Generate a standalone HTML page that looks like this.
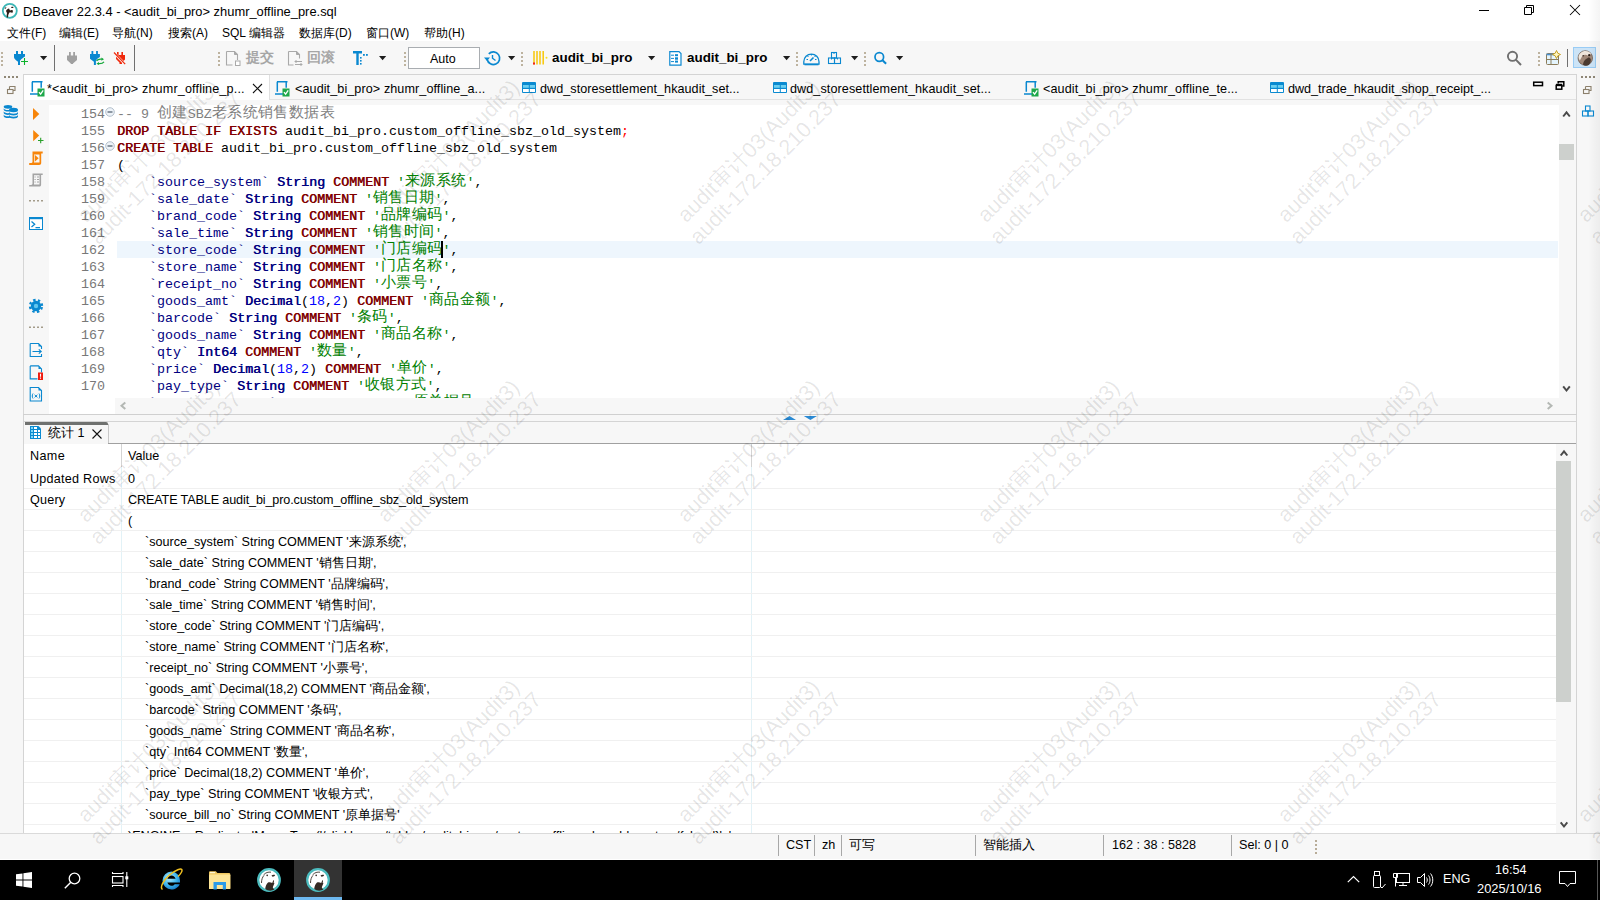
<!DOCTYPE html><html><head><meta charset="utf-8"><style>
*{box-sizing:border-box}
html,body{margin:0;padding:0;width:1600px;height:900px;overflow:hidden;background:#fff}
body{position:relative;font-family:"Liberation Sans",sans-serif;font-size:12px;color:#000}
.a{position:absolute}
.t{position:absolute;white-space:pre;line-height:1}
.mono{font-family:"Liberation Mono",monospace;font-size:13.333px;letter-spacing:0px}
.kw{color:#800000;font-weight:normal;text-shadow:0.55px 0 0 #800000}
.ty{color:#000080;font-weight:normal;text-shadow:0.55px 0 0 #000080}
.id{color:#000080}
.st{color:#008000}
.nu{color:#0000ff}
.cm{color:#808080}
.pl{color:#000}
.cj{font-size:14.6px;letter-spacing:0.4px;position:relative;top:-1px;line-height:0;font-weight:500}
.wm{position:absolute;transform-origin:0 0;transform:rotate(-45deg);white-space:pre;color:rgba(0,0,0,0.105);font-size:21.6px;line-height:24px;letter-spacing:0px;text-align:center}
</style></head><body>

<div class="a" style="left:0;top:0;width:1600px;height:41px;background:#fff"></div>
<div class="t" id="title" style="left:23px;top:6px;font-size:12.9px;color:#000">DBeaver 22.3.4 - &lt;audit_bi_pro&gt; zhumr_offline_pre.sql</div>
<div class="t" style="left:7px;top:27px;font-size:12px">文件(F)</div>
<div class="t" style="left:59px;top:27px;font-size:12px">编辑(E)</div>
<div class="t" style="left:112px;top:27px;font-size:12px">导航(N)</div>
<div class="t" style="left:168px;top:27px;font-size:12px">搜索(A)</div>
<div class="t" style="left:222px;top:27px;font-size:12px">SQL 编辑器</div>
<div class="t" style="left:299px;top:27px;font-size:12px">数据库(D)</div>
<div class="t" style="left:366px;top:27px;font-size:12px">窗口(W)</div>
<div class="t" style="left:424px;top:27px;font-size:12px">帮助(H)</div>
<div class="a" style="left:0;top:41px;width:1600px;height:33px;background:#f7f7f7"></div>
<div class="a" style="left:1px;top:52px;width:2px;height:2px;background:#bdb39f"></div><div class="a" style="left:1px;top:56px;width:2px;height:2px;background:#bdb39f"></div><div class="a" style="left:1px;top:60px;width:2px;height:2px;background:#bdb39f"></div><div class="a" style="left:1px;top:64px;width:2px;height:2px;background:#bdb39f"></div>
<div class="a" style="left:218px;top:52px;width:2px;height:2px;background:#bdb39f"></div><div class="a" style="left:218px;top:56px;width:2px;height:2px;background:#bdb39f"></div><div class="a" style="left:218px;top:60px;width:2px;height:2px;background:#bdb39f"></div><div class="a" style="left:218px;top:64px;width:2px;height:2px;background:#bdb39f"></div>
<div class="a" style="left:404px;top:52px;width:2px;height:2px;background:#bdb39f"></div><div class="a" style="left:404px;top:56px;width:2px;height:2px;background:#bdb39f"></div><div class="a" style="left:404px;top:60px;width:2px;height:2px;background:#bdb39f"></div><div class="a" style="left:404px;top:64px;width:2px;height:2px;background:#bdb39f"></div>
<div class="a" style="left:521px;top:52px;width:2px;height:2px;background:#bdb39f"></div><div class="a" style="left:521px;top:56px;width:2px;height:2px;background:#bdb39f"></div><div class="a" style="left:521px;top:60px;width:2px;height:2px;background:#bdb39f"></div><div class="a" style="left:521px;top:64px;width:2px;height:2px;background:#bdb39f"></div>
<div class="a" style="left:796px;top:52px;width:2px;height:2px;background:#bdb39f"></div><div class="a" style="left:796px;top:56px;width:2px;height:2px;background:#bdb39f"></div><div class="a" style="left:796px;top:60px;width:2px;height:2px;background:#bdb39f"></div><div class="a" style="left:796px;top:64px;width:2px;height:2px;background:#bdb39f"></div>
<div class="a" style="left:864px;top:52px;width:2px;height:2px;background:#bdb39f"></div><div class="a" style="left:864px;top:56px;width:2px;height:2px;background:#bdb39f"></div><div class="a" style="left:864px;top:60px;width:2px;height:2px;background:#bdb39f"></div><div class="a" style="left:864px;top:64px;width:2px;height:2px;background:#bdb39f"></div>
<div class="a" style="left:1538px;top:52px;width:2px;height:2px;background:#bdb39f"></div><div class="a" style="left:1538px;top:56px;width:2px;height:2px;background:#bdb39f"></div><div class="a" style="left:1538px;top:60px;width:2px;height:2px;background:#bdb39f"></div><div class="a" style="left:1538px;top:64px;width:2px;height:2px;background:#bdb39f"></div>
<div class="t" style="left:246px;top:51px;font-size:13.5px;font-weight:bold;color:#a6a6a6">提交</div>
<div class="t" style="left:307px;top:51px;font-size:13.5px;font-weight:bold;color:#a6a6a6">回滚</div>
<div class="a" style="left:408px;top:47px;width:72px;height:22px;background:#fff;border:1px solid #a9adb1"></div>
<div class="t" style="left:430px;top:53px;font-size:12.5px">Auto</div>
<div class="t" id="db1" style="left:552px;top:51px;font-size:13.4px;font-weight:bold">audit_bi_pro</div>
<div class="t" id="db2" style="left:687px;top:51px;font-size:13.4px;font-weight:bold">audit_bi_pro</div>
<div class="a" style="left:1573px;top:47px;width:23px;height:21px;background:#cce4f7;border:1px solid #99ccf5"></div>
<svg class="a" style="left:0;top:0" width="1600" height="74" viewBox="0 0 1600 74"><circle cx="9.8" cy="10.8" r="7" fill="#fff" stroke="#3cb6b6" stroke-width="1.8"/><path d="M8 17.5c0-2 .5-4 1.5-5 1-.5 2 .5 3 .2l.5-2c-.5-1-2-.8-3-.2L9 8.5c-1 0-2.5 1-3 2.5l1 2c-.3 1.5-.5 3 0 4.5z" fill="#2a1e18"/><path d="M11 7.2c.8-.5 2-.5 2.6 0-.4.8-1.2 1-2 .9z" fill="#2a1e18"/><path d="M5 9c.2-1 .8-1.6 1.3-2" stroke="#3a2e28" stroke-width=".9" fill="none"/><path d="M1479 10.5h10" stroke="#000" stroke-width="1"/><path d="M1524.5 7.5h7v7h-7z" fill="none" stroke="#000"/><path d="M1526.5 7.5v-2h7v7h-2" fill="none" stroke="#000"/><path d="M1570 5l10 10M1580 5l-10 10" stroke="#000" stroke-width="1.05"/><path d="M16 51h2v3h3v-3h2v3h2v2.5c-1.5 1.2-3.5 2-5 4.2V65h-2v-3.2C15.5 60 14 58.5 14 57.2V54h2z" fill="#0a88d0"/><path d="M21 61.5h7M24.5 58v7" stroke="#0cb32c" stroke-width="1.1"/><path d="M40 56h7.2l-3.6 4.2z" fill="#1e1e1e"/><path d="M54.5 45v26" stroke="#707070" stroke-width="1"/><path d="M69 52h1.8v3.5h2.4V52H75v3.5h2v4.5l-4 3.5v.5h-2.2v-.5l-3.8-3.5v-4.5h2z" fill="#a0a0a0"/><path d="M91.5 51h1.8v3h2.8v-3h1.8v3h2v3c-1.6.8-3 2-4 3.5V65h-2v-3.3L90 58.8V54h1.5z" fill="#0a88d0"/><path d="M96.5 60.8c1.2-1.6 3.2-2 5.5-1.6M104 61.8c-1 1.4-3 2-5.5 1.8" stroke="#14a83a" stroke-width="1.2" fill="none"/><path d="M101.5 57.5l2.5 1.8-2.6 1.5z M99 62l-2.6 1.7 2.6 1.3z" fill="#14a83a"/><path d="M117 52h1.6v3h2.8v-3h1.6v3h2v4.5l-3 3v1.5h-2.5v-1.5l-3.5-3.5V55h1z" fill="#f0280a"/><path d="M114 52.8l11 11.4" stroke="#f7f7f7" stroke-width="2.4"/><path d="M114 52.5l11.2 11.6" stroke="#f0280a" stroke-width="1.2"/><path d="M134.5 45v26" stroke="#707070" stroke-width="1"/><path d="M226.5 51.5h8l3 3v5.5M226.5 51.5v13.5h6" stroke="#a9a9a9" stroke-width="1.1" fill="none"/><path d="M234.5 51.5v3h3" stroke="#a9a9a9" fill="#a9a9a9"/><rect x="235.5" y="61" width="4.5" height="4.5" fill="#fff" stroke="#a9a9a9"/><path d="M288.5 51.5h8l3 3v4M288.5 51.5v13.5h5" stroke="#a9a9a9" stroke-width="1.1" fill="none"/><path d="M296.5 51.5v3h3" stroke="#a9a9a9" fill="#a9a9a9"/><path d="M295 61.5h7M295 64.5h7M296.5 60l-1.5 1.5 1.5 1.5M300.5 63l1.5 1.5-1.5 1.5" stroke="#a9a9a9" fill="none"/><path d="M353 51h9v2.4h-3.3V65h-2.4V53.4H353z" fill="#0a88d0"/><rect x="363" y="54" width="1.8" height="1.8" fill="#0a88d0"/><rect x="366" y="54" width="1.8" height="1.8" fill="#0a88d0"/><rect x="360" y="57" width="1.6" height="1.6" fill="#0a88d0"/><rect x="360" y="60" width="1.6" height="1.6" fill="#0a88d0"/><rect x="360" y="63" width="1.6" height="1.6" fill="#0a88d0"/><path d="M379 56h7.2l-3.6 4.2z" fill="#1e1e1e"/><path d="M487.2 59.5a6.3 6.3 0 1 0 1.6-5.6" stroke="#0a88d0" stroke-width="1.7" fill="none"/><path d="M484 57.5h6l-3 3.5z" fill="#0a88d0"/><path d="M492.5 55v3.2l3 2.3" stroke="#0a88d0" stroke-width="1.4" fill="none"/><path d="M508 56h7.2l-3.6 4.2z" fill="#1e1e1e"/><path d="M534 51v13.5M537 51v13.5M540 51v13.5M543.2 51v13.5" stroke="#f8c808" stroke-width="1.5"/><rect x="533" y="62.5" width="2" height="2" fill="#f02020"/><circle cx="546.5" cy="57.8" r="1" fill="#f8e020"/><path d="M648 56h7.2l-3.6 4.2z" fill="#1e1e1e"/><path d="M669.8 51.6h9.2l2 2v11.6h-11.2z" fill="#fff" stroke="#0a88d0" stroke-width="1.2"/><path d="M671 55.2h3M671 58.4h3M671 61.6h3" stroke="#0a88d0" stroke-width="1"/><rect x="675" y="54.2" width="3" height="2" fill="#0a88d0"/><rect x="675" y="57.3" width="3" height="2.4" fill="#0a88d0"/><rect x="675" y="60.6" width="3" height="2" fill="#0a88d0"/><path d="M783 56h7.2l-3.6 4.2z" fill="#1e1e1e"/><path d="M803.8 64.2v-2.5a7.6 7.6 0 0 1 15.2 0v2.5z" fill="none" stroke="#0a88d0" stroke-width="1.3"/><path d="M804.5 64.5h14" stroke="#0a88d0" stroke-width="1.6"/><path d="M810 61l3.5-3.5" stroke="#0a88d0" stroke-width="1.6"/><path d="M811.4 54v1.5M806.5 59.5h1.5M815 59.5h1.5M807.5 56l1 1M815.5 56l-1 1" stroke="#0a88d0" stroke-width="1"/><rect x="831.5" y="52.5" width="5" height="5.5" fill="none" stroke="#0a88d0" stroke-width="1.1"/><rect x="828.5" y="58" width="6" height="5.5" fill="none" stroke="#0a88d0" stroke-width="1.1"/><rect x="834.5" y="58" width="6" height="5.5" fill="none" stroke="#0a88d0" stroke-width="1.1"/><path d="M834 52.5v1.5M831.5 58v1.5M837.5 58v1.5" stroke="#0a88d0"/><path d="M851 56h7.2l-3.6 4.2z" fill="#1e1e1e"/><circle cx="879.3" cy="57" r="4.3" fill="none" stroke="#0a88d0" stroke-width="1.7"/><path d="M882.5 60.2l3.6 3.6" stroke="#0a88d0" stroke-width="2"/><path d="M896 56h7.2l-3.6 4.2z" fill="#1e1e1e"/><circle cx="1512.5" cy="56.3" r="4.6" fill="none" stroke="#707070" stroke-width="1.9"/><path d="M1515.8 59.6l5.2 5.4" stroke="#707070" stroke-width="2"/><rect x="1546.5" y="53.5" width="12" height="11" rx="1" fill="#e4f4fc" stroke="#8c7c5a"/><path d="M1546.5 54.5h12" stroke="#4a90d0" stroke-width="1.6"/><path d="M1546.5 59.5h12M1551 54v10" stroke="#8c7c5a"/><path d="M1556.5 50.5l1.3 2.7 2.7 1.3-2.7 1.3-1.3 2.7-1.3-2.7-2.7-1.3 2.7-1.3z" fill="#fff6c0" stroke="#c8a020" stroke-width="1"/><path d="M1567.5 49v18" stroke="#707070" stroke-width="1"/><circle cx="1585.3" cy="58" r="7.3" fill="#a08878" stroke="#5a4a40" stroke-width=".6"/><path d="M1578.5 57c.5-3.5 3.5-6 7-6 2.5 0 4.5 1.2 5.8 3l-3.5 1.5c-2-1-4-.8-5.5.5l-2.5 4.5c-.8-1-1.2-2.2-1.3-3.5z" fill="#efe6dc"/><path d="M1583 64.8c0-2.5 1.5-5 3.5-6l2.5-1.5 1.8 1.8c.3 2-.5 4.5-2 5.8-1.5 1-4 1-5.8-.1z" fill="#4a3a30"/><circle cx="1589.2" cy="55.2" r="1.1" fill="#2a1e18"/><circle cx="1583.2" cy="55.8" r=".7" fill="#2a1e18"/></svg>
<div class="a" style="left:0;top:74px;width:23px;height:759px;background:#f7f7f7"></div>
<div class="a" style="left:4px;top:76px;width:2px;height:2px;background:#8f8776"></div><div class="a" style="left:8px;top:76px;width:2px;height:2px;background:#8f8776"></div><div class="a" style="left:12px;top:76px;width:2px;height:2px;background:#8f8776"></div><div class="a" style="left:16px;top:76px;width:2px;height:2px;background:#8f8776"></div>
<div class="a" style="left:1577px;top:74px;width:23px;height:759px;background:#f7f7f7"></div>
<div class="a" style="left:1581px;top:76px;width:2px;height:2px;background:#8f8776"></div><div class="a" style="left:1585px;top:76px;width:2px;height:2px;background:#8f8776"></div><div class="a" style="left:1589px;top:76px;width:2px;height:2px;background:#8f8776"></div><div class="a" style="left:1593px;top:76px;width:2px;height:2px;background:#8f8776"></div>
<div class="a" style="left:23px;top:74px;width:1554px;height:340px;background:#f7f7f7;border:1px solid #d4d4d4;border-bottom:none"></div>
<div class="a" style="left:270px;top:99px;width:1306px;height:1px;background:#e2e2e2"></div>
<div class="a" style="left:24px;top:75px;width:246px;height:25px;background:#fff;border-right:1px solid #e0e0e0"></div>
<svg class="a" style="left:29px;top:81px" width="17" height="16" viewBox="0 0 17 16"><path d="M3 0.8h10.5M3.3 0.8v10M12.2 0.8v6M1 13h8" stroke="#0a88d0" stroke-width="1.5" fill="none"/><rect x="8.5" y="7.5" width="7" height="8" fill="#1ea84a"/><path d="M10 11.2l1.6 2 2.6-3.8" stroke="#fff" stroke-width="1.3" fill="none"/></svg>
<div class="t tab" style="left:47px;top:83px;font-size:12.6px;letter-spacing:0.16px">*&lt;audit_bi_pro&gt; zhumr_offline_p...</div>
<svg class="a" style="left:274px;top:81px" width="17" height="16" viewBox="0 0 17 16"><path d="M3 0.8h10.5M3.3 0.8v10M12.2 0.8v6M1 13h8" stroke="#0a88d0" stroke-width="1.5" fill="none"/><rect x="8.5" y="7.5" width="7" height="8" fill="#1ea84a"/><path d="M10 11.2l1.6 2 2.6-3.8" stroke="#fff" stroke-width="1.3" fill="none"/></svg>
<div class="t tab" style="left:295px;top:83px;font-size:12.6px;letter-spacing:0.09px">&lt;audit_bi_pro&gt; zhumr_offline_a...</div>
<svg class="a" style="left:522px;top:82px" width="14" height="11" viewBox="0 0 14 11"><rect x="0" y="0" width="14" height="11" rx="1" fill="#0a8ad0"/><rect x="1" y="3" width="5.8" height="2.8" fill="#6ccff0"/><rect x="7.8" y="3" width="5.2" height="2.8" fill="#6ccff0"/><rect x="1" y="7" width="5.8" height="3" fill="#fff"/><rect x="7.8" y="7" width="5.2" height="3" fill="#fff"/></svg>
<div class="t tab" style="left:540px;top:83px;font-size:12.6px;letter-spacing:0.045px">dwd_storesettlement_hkaudit_set...</div>
<svg class="a" style="left:773px;top:82px" width="14" height="11" viewBox="0 0 14 11"><rect x="0" y="0" width="14" height="11" rx="1" fill="#0a8ad0"/><rect x="1" y="3" width="5.8" height="2.8" fill="#6ccff0"/><rect x="7.8" y="3" width="5.2" height="2.8" fill="#6ccff0"/><rect x="1" y="7" width="5.8" height="3" fill="#fff"/><rect x="7.8" y="7" width="5.2" height="3" fill="#fff"/></svg>
<div class="t tab" style="left:790px;top:83px;font-size:12.6px;letter-spacing:0.09px">dwd_storesettlement_hkaudit_set...</div>
<svg class="a" style="left:1023px;top:81px" width="17" height="16" viewBox="0 0 17 16"><path d="M3 0.8h10.5M3.3 0.8v10M12.2 0.8v6M1 13h8" stroke="#0a88d0" stroke-width="1.5" fill="none"/><rect x="8.5" y="7.5" width="7" height="8" fill="#1ea84a"/><path d="M10 11.2l1.6 2 2.6-3.8" stroke="#fff" stroke-width="1.3" fill="none"/></svg>
<div class="t tab" style="left:1043px;top:83px;font-size:12.6px;letter-spacing:0.12px">&lt;audit_bi_pro&gt; zhumr_offline_te...</div>
<svg class="a" style="left:1270px;top:82px" width="14" height="11" viewBox="0 0 14 11"><rect x="0" y="0" width="14" height="11" rx="1" fill="#0a8ad0"/><rect x="1" y="3" width="5.8" height="2.8" fill="#6ccff0"/><rect x="7.8" y="3" width="5.2" height="2.8" fill="#6ccff0"/><rect x="1" y="7" width="5.8" height="3" fill="#fff"/><rect x="7.8" y="7" width="5.2" height="3" fill="#fff"/></svg>
<div class="t tab" style="left:1288px;top:83px;font-size:12.6px;letter-spacing:0.0px">dwd_trade_hkaudit_shop_receipt_...</div>
<svg class="a" style="left:252px;top:83px" width="11" height="11" viewBox="0 0 11 11"><path d="M1 1L10 10M10 1L1 10" stroke="#111" stroke-width="1.1"/></svg>
<svg class="a" style="left:1530px;top:78px" width="40" height="16" viewBox="1530 78 40 16"><rect x="1533.7" y="82.2" width="8.8" height="3.4" fill="none" stroke="#000" stroke-width="1.5"/></svg>
<svg class="a" style="left:1550px;top:78px" width="20" height="16" viewBox="1550 78 20 16"><path d="M1558.2 83.6v-1.9h5.6v4.4h-1.6" fill="none" stroke="#000" stroke-width="1.5"/><rect x="1556.2" y="85.4" width="5.6" height="3.8" fill="none" stroke="#000" stroke-width="1.5"/><path d="M1556 84.6h6.2" stroke="#000" stroke-width="1.6"/></svg>
<div class="a" style="left:49px;top:105px;width:1510px;height:293px;background:#fff"></div>
<div class="a" style="left:49px;top:398px;width:66px;height:16px;background:#fff"></div>
<div class="a" style="left:1559px;top:105px;width:17px;height:293px;background:#f7f7f7"></div>
<svg class="a" style="left:1540px;top:100px" width="40" height="20" viewBox="1540 100 40 20"><path d="M1563.2 116.5L1566.5 112.3L1569.8 116.5" stroke="#4a4a4a" stroke-width="2" fill="none"/></svg>
<div class="a" style="left:1559px;top:144px;width:15px;height:16px;background:#cdd0cd"></div>
<svg class="a" style="left:1540px;top:380px" width="40" height="20" viewBox="1540 380 40 20"><path d="M1563.2 386.3L1566.5 390.5L1569.8 386.3" stroke="#4a4a4a" stroke-width="2" fill="none"/></svg>
<div class="a" style="left:115px;top:398px;width:1444px;height:16px;background:#f7f7f7"></div>
<svg class="a" style="left:110px;top:398px" width="20" height="16" viewBox="110 398 20 16"><path d="M125.3 402.5L121.5 405.8L125.3 409.1" stroke="#b4b8b4" stroke-width="2" fill="none"/></svg>
<svg class="a" style="left:1540px;top:398px" width="20" height="16" viewBox="1540 398 20 16"><path d="M1547.7 402.5L1551.5 405.8L1547.7 409.1" stroke="#b4b8b4" stroke-width="2" fill="none"/></svg>
<svg class="a" style="left:0;top:74px" width="50" height="340" viewBox="0 74 50 340"><path d="M9.5 86.5h5.5v4h-2M9.5 86.5v2.5" fill="none" stroke="#8c806c" stroke-width="1.1"/><rect x="7.5" y="89.5" width="5.5" height="4" fill="none" stroke="#8c806c" stroke-width="1.1"/><g fill="#0a88d0"><ellipse cx="8" cy="106.8" rx="4.3" ry="1.9"/><path d="M3.7 108.2c0 1 2 1.9 4.3 1.9 1 0 1.6-.1 2.4-.3l-.3 1.6c-.6.1-1.3.2-2.1.2-2.3 0-4.3-.9-4.3-1.9z"/><path d="M3.7 111.3c0 1 2 1.9 4.3 1.9.6 0 1.3 0 1.8-.1v1.7c-.6.1-1.2.1-1.8.1-2.3 0-4.3-.9-4.3-1.9z"/><path d="M3.7 114.4c0 1 2 1.9 4.3 1.9.6 0 1.2 0 1.8-.1v1.8c-.6.1-1.2.1-1.8.1-2.3 0-4.3-.9-4.3-1.9z"/><ellipse cx="13.5" cy="110" rx="4.5" ry="2.2"/><path d="M9 111.8c0 1.1 2 2 4.5 2s4.5-.9 4.5-2v1.8c0 1.1-2 2-4.5 2s-4.5-.9-4.5-2z"/><path d="M9 114.8c0 1.1 2 2 4.5 2s4.5-.9 4.5-2v1.8c0 1.1-2 2-4.5 2s-4.5-.9-4.5-2z"/></g><path d="M23.5 74v340" stroke="#d6d6d6"/><path d="M33 108l6.3 6-6.3 6z" fill="#f7850a"/><path d="M33.2 130l6 5.5-6 5.8z" fill="#f7850a"/><path d="M38 140.5h5.5M40.7 137.8v5.4" stroke="#2aa02a" stroke-width="1.1"/><path d="M32.5 151.5h10.2v2h-1.5v9.5c0 1.2-.8 2-2 2H29.2v-2h1.8c.8 0 1.2-.4 1.5-1z" fill="#f7850a"/><path d="M34 154.5v8h5.5v-8z" fill="#f7f7f7"/><path d="M34.7 154.8l4 3.5-4 3.5z" fill="#f7850a"/><path d="M32.5 173.5h10.2v1.6h-1.6v9.6c0 1-.7 1.8-1.7 1.8H29.2v-1.6h2c.7 0 1.2-.5 1.3-1.2z" fill="#a4a4a4"/><path d="M34 175.2v9.3h5.5v-9.3z" fill="#f7f7f7"/><path d="M34.5 177h1.2M37 177h2M34.5 179.5h1.2M37 179.5h2M34.5 182h1.2M37 182h2" stroke="#a4a4a4" stroke-width="1"/><path d="M29 200.8h2M33 200.8h2M37 200.8h2M41 200.8h2" stroke="#a49c8a" stroke-width="1.6"/><rect x="29.5" y="217.5" width="13" height="12" fill="#fff" stroke="#0a88d0"/><rect x="29" y="217" width="14" height="2.2" fill="#0a88d0"/><path d="M31.5 221.5l3.2 2.8-3.2 2.8M35.5 227.6h4.5" stroke="#0a88d0" stroke-width="1.3" fill="none"/><g transform="translate(36 306)"><circle r="5.2" fill="#0a88d0"/><circle r="6" fill="none" stroke="#0a88d0" stroke-width="2.4" stroke-dasharray="2.36 2.36" transform="rotate(11)"/><circle r="2.2" fill="#62c6ee"/></g><path d="M29 327.2h2M33 327.2h2M37 327.2h2M41 327.2h2" stroke="#a49c8a" stroke-width="1.6"/><path d="M30.2 343.5h8.3l3 3v2.5M30.2 343.5v13h11.3v-2.5" fill="none" stroke="#0a88d0" stroke-width="1.1"/><path d="M38.5 343.5v3h3z" fill="#0a88d0"/><path d="M32.5 351.5h8.5M38.8 349.3l2.4 2.2-2.4 2.2" stroke="#0a88d0" stroke-width="1.1" fill="none"/><path d="M30.2 365.9h8.3l3 3v3.6M30.2 365.9v13h7.3" fill="none" stroke="#0a88d0" stroke-width="1.1"/><path d="M38.5 365.9v3h3z" fill="#0a88d0"/><rect x="38" y="372.5" width="5" height="7.5" fill="#f01c10"/><path d="M40.5 373.8v3M40.5 377.6v1.2" stroke="#fff" stroke-width="1.1"/><path d="M30.2 387.5h8.3l3 3v10.5h-11.3z" fill="none" stroke="#0a88d0" stroke-width="1.1"/><path d="M38.5 387.5v3h3z" fill="#0a88d0"/><path d="M33 393.5c-1 1.5-1 3.5 0 5M39 393.5c1 1.5 1 3.5 0 5M34.6 394.8l2.8 2.6M37.4 394.8l-2.8 2.6" stroke="#0a88d0" stroke-width="1" fill="none"/></svg>
<svg class="a" style="left:1577px;top:74px" width="23" height="60" viewBox="1577 74 23 60"><path d="M1585.5 86.5h5.5v4h-2M1585.5 86.5v2.5" fill="none" stroke="#8c806c" stroke-width="1.1"/><rect x="1583.5" y="89.5" width="5.5" height="4" fill="none" stroke="#8c806c" stroke-width="1.1"/><rect x="1585.5" y="106" width="4.5" height="5" fill="none" stroke="#0a88d0" stroke-width="1.1"/><rect x="1582.5" y="111" width="5.5" height="5" fill="none" stroke="#0a88d0" stroke-width="1.1"/><rect x="1588" y="111" width="5.5" height="5" fill="none" stroke="#0a88d0" stroke-width="1.1"/></svg>
<div class="a" style="left:117px;top:241px;width:1441px;height:17px;background:#eef6fd"></div>
<div class="a" style="left:49px;top:105px;width:1510px;height:293px;overflow:hidden"><div class="a" style="left:0;top:1px;width:1510px;height:293px">
<div class="t mono" style="left:32px;top:0px;height:17px;line-height:17px;color:#787878">154</div>
<div class="t mono" style="left:68px;top:0px;height:17px;line-height:17px"><span class="cm">-- 9 </span><span class="cm cj">创建</span><span class="cm">SBZ</span><span class="cm cj">老系统销售数据表</span></div>
<div class="t mono" style="left:32px;top:17px;height:17px;line-height:17px;color:#787878">155</div>
<div class="t mono" style="left:68px;top:17px;height:17px;line-height:17px"><span class="kw">DROP TABLE IF EXISTS </span><span class="pl">audit_bi_pro.custom_offline_sbz_old_system</span><span style="color:#ff0000">;</span></div>
<div class="t mono" style="left:32px;top:34px;height:17px;line-height:17px;color:#787878">156</div>
<div class="t mono" style="left:68px;top:34px;height:17px;line-height:17px"><span class="kw">CREATE TABLE </span><span class="pl">audit_bi_pro.custom_offline_sbz_old_system</span></div>
<div class="t mono" style="left:32px;top:51px;height:17px;line-height:17px;color:#787878">157</div>
<div class="t mono" style="left:68px;top:51px;height:17px;line-height:17px"><span class="pl">(</span></div>
<div class="t mono" style="left:32px;top:68px;height:17px;line-height:17px;color:#787878">158</div>
<div class="t mono" style="left:68px;top:68px;height:17px;line-height:17px"><span class="pl">    </span><span class="id">`source_system`</span><span class="pl"> </span><span class="ty">String</span><span class="pl"> </span><span class="kw">COMMENT</span><span class="pl"> </span><span class="st">&#x27;</span><span class="st cj">来源系统</span><span class="st">&#x27;</span><span class="pl">,</span></div>
<div class="t mono" style="left:32px;top:85px;height:17px;line-height:17px;color:#787878">159</div>
<div class="t mono" style="left:68px;top:85px;height:17px;line-height:17px"><span class="pl">    </span><span class="id">`sale_date`</span><span class="pl"> </span><span class="ty">String</span><span class="pl"> </span><span class="kw">COMMENT</span><span class="pl"> </span><span class="st">&#x27;</span><span class="st cj">销售日期</span><span class="st">&#x27;</span><span class="pl">,</span></div>
<div class="t mono" style="left:32px;top:102px;height:17px;line-height:17px;color:#787878">160</div>
<div class="t mono" style="left:68px;top:102px;height:17px;line-height:17px"><span class="pl">    </span><span class="id">`brand_code`</span><span class="pl"> </span><span class="ty">String</span><span class="pl"> </span><span class="kw">COMMENT</span><span class="pl"> </span><span class="st">&#x27;</span><span class="st cj">品牌编码</span><span class="st">&#x27;</span><span class="pl">,</span></div>
<div class="t mono" style="left:32px;top:119px;height:17px;line-height:17px;color:#787878">161</div>
<div class="t mono" style="left:68px;top:119px;height:17px;line-height:17px"><span class="pl">    </span><span class="id">`sale_time`</span><span class="pl"> </span><span class="ty">String</span><span class="pl"> </span><span class="kw">COMMENT</span><span class="pl"> </span><span class="st">&#x27;</span><span class="st cj">销售时间</span><span class="st">&#x27;</span><span class="pl">,</span></div>
<div class="t mono" style="left:32px;top:136px;height:17px;line-height:17px;color:#787878">162</div>
<div class="t mono" style="left:68px;top:136px;height:17px;line-height:17px"><span class="pl">    </span><span class="id">`store_code`</span><span class="pl"> </span><span class="ty">String</span><span class="pl"> </span><span class="kw">COMMENT</span><span class="pl"> </span><span class="st">&#x27;</span><span class="st cj">门店编码</span><span class="st">&#x27;</span><span class="pl">,</span></div>
<div class="t mono" style="left:32px;top:153px;height:17px;line-height:17px;color:#787878">163</div>
<div class="t mono" style="left:68px;top:153px;height:17px;line-height:17px"><span class="pl">    </span><span class="id">`store_name`</span><span class="pl"> </span><span class="ty">String</span><span class="pl"> </span><span class="kw">COMMENT</span><span class="pl"> </span><span class="st">&#x27;</span><span class="st cj">门店名称</span><span class="st">&#x27;</span><span class="pl">,</span></div>
<div class="t mono" style="left:32px;top:170px;height:17px;line-height:17px;color:#787878">164</div>
<div class="t mono" style="left:68px;top:170px;height:17px;line-height:17px"><span class="pl">    </span><span class="id">`receipt_no`</span><span class="pl"> </span><span class="ty">String</span><span class="pl"> </span><span class="kw">COMMENT</span><span class="pl"> </span><span class="st">&#x27;</span><span class="st cj">小票号</span><span class="st">&#x27;</span><span class="pl">,</span></div>
<div class="t mono" style="left:32px;top:187px;height:17px;line-height:17px;color:#787878">165</div>
<div class="t mono" style="left:68px;top:187px;height:17px;line-height:17px"><span class="pl">    </span><span class="id">`goods_amt`</span><span class="pl"> </span><span class="ty">Decimal</span><span class="pl">(</span><span class="nu">18</span><span class="pl">,</span><span class="nu">2</span><span class="pl">)</span><span class="pl"> </span><span class="kw">COMMENT</span><span class="pl"> </span><span class="st">&#x27;</span><span class="st cj">商品金额</span><span class="st">&#x27;</span><span class="pl">,</span></div>
<div class="t mono" style="left:32px;top:204px;height:17px;line-height:17px;color:#787878">166</div>
<div class="t mono" style="left:68px;top:204px;height:17px;line-height:17px"><span class="pl">    </span><span class="id">`barcode`</span><span class="pl"> </span><span class="ty">String</span><span class="pl"> </span><span class="kw">COMMENT</span><span class="pl"> </span><span class="st">&#x27;</span><span class="st cj">条码</span><span class="st">&#x27;</span><span class="pl">,</span></div>
<div class="t mono" style="left:32px;top:221px;height:17px;line-height:17px;color:#787878">167</div>
<div class="t mono" style="left:68px;top:221px;height:17px;line-height:17px"><span class="pl">    </span><span class="id">`goods_name`</span><span class="pl"> </span><span class="ty">String</span><span class="pl"> </span><span class="kw">COMMENT</span><span class="pl"> </span><span class="st">&#x27;</span><span class="st cj">商品名称</span><span class="st">&#x27;</span><span class="pl">,</span></div>
<div class="t mono" style="left:32px;top:238px;height:17px;line-height:17px;color:#787878">168</div>
<div class="t mono" style="left:68px;top:238px;height:17px;line-height:17px"><span class="pl">    </span><span class="id">`qty`</span><span class="pl"> </span><span class="ty">Int64</span><span class="pl"> </span><span class="kw">COMMENT</span><span class="pl"> </span><span class="st">&#x27;</span><span class="st cj">数量</span><span class="st">&#x27;</span><span class="pl">,</span></div>
<div class="t mono" style="left:32px;top:255px;height:17px;line-height:17px;color:#787878">169</div>
<div class="t mono" style="left:68px;top:255px;height:17px;line-height:17px"><span class="pl">    </span><span class="id">`price`</span><span class="pl"> </span><span class="ty">Decimal</span><span class="pl">(</span><span class="nu">18</span><span class="pl">,</span><span class="nu">2</span><span class="pl">)</span><span class="pl"> </span><span class="kw">COMMENT</span><span class="pl"> </span><span class="st">&#x27;</span><span class="st cj">单价</span><span class="st">&#x27;</span><span class="pl">,</span></div>
<div class="t mono" style="left:32px;top:272px;height:17px;line-height:17px;color:#787878">170</div>
<div class="t mono" style="left:68px;top:272px;height:17px;line-height:17px"><span class="pl">    </span><span class="id">`pay_type`</span><span class="pl"> </span><span class="ty">String</span><span class="pl"> </span><span class="kw">COMMENT</span><span class="pl"> </span><span class="st">&#x27;</span><span class="st cj">收银方式</span><span class="st">&#x27;</span><span class="pl">,</span></div>
<div class="t mono" style="left:32px;top:289px;height:17px;line-height:17px;color:#787878">171</div>
<div class="t mono" style="left:68px;top:289px;height:17px;line-height:17px"><span class="pl">    </span><span class="id">`source_bill_no`</span><span class="pl"> </span><span class="ty">String</span><span class="pl"> </span><span class="kw">COMMENT</span><span class="pl"> </span><span class="st">&#x27;</span><span class="st cj">原单据号</span><span class="st">&#x27;</span><span class="pl">,</span></div>
<svg class="a" style="left:56px;top:1px" width="10" height="10" viewBox="0 0 10 10"><circle cx="5" cy="5" r="4.3" fill="#eef3f8" stroke="#b4c0cc"/><path d="M2.5 5h5" stroke="#4a5a6a" stroke-width="1.2"/></svg>
<svg class="a" style="left:56px;top:35px" width="10" height="10" viewBox="0 0 10 10"><circle cx="5" cy="5" r="4.3" fill="#eef3f8" stroke="#b4c0cc"/><path d="M2.5 5h5" stroke="#4a5a6a" stroke-width="1.2"/></svg>
</div></div>
<div class="a" style="left:441px;top:241px;width:2px;height:17px;background:#000"></div>
<div class="a" style="left:23px;top:414px;width:1554px;height:1px;background:#d0d0d0"></div>
<div class="a" style="left:23px;top:415px;width:1554px;height:6px;background:#f7f7f7;border-left:1px solid #d4d4d4;border-right:1px solid #d4d4d4"></div>
<svg class="a" style="left:780px;top:414px" width="40" height="8" viewBox="780 414 40 8"><path d="M783 420L789.5 416L796 420z M803.8 416H817L810.4 420z" fill="#2a8ad4"/></svg>
<div class="a" style="left:23px;top:421px;width:1554px;height:413px;background:#f7f7f7;border:1px solid #d4d4d4"></div>
<div class="a" style="left:25px;top:422px;width:83px;height:3px;background:#6f716f;border-radius:0 2px 0 0"></div>
<div class="a" style="left:108px;top:424px;width:1px;height:20px;background:#c8c8c8"></div>
<div class="a" style="left:108px;top:443px;width:1468px;height:1px;background:#a0a0a0"></div>
<svg class="a" style="left:30px;top:426px" width="12" height="13" viewBox="0 0 12 13"><path d="M0 0h8.5l2.5 2.5V13H0z" fill="#0a8ad0"/><rect x="1" y="1" width="2" height="2" fill="#7fd8f8"/><rect x="4" y="1" width="3" height="2" fill="#fff"/><rect x="8" y="3" width="2" height="0.01" fill="#fff"/><rect x="1" y="4" width="2" height="2" fill="#7fd8f8"/><rect x="4" y="4" width="3" height="2" fill="#fff"/><rect x="8" y="4" width="2" height="2" fill="#fff"/><rect x="1" y="7" width="2" height="2" fill="#7fd8f8"/><rect x="4" y="7" width="3" height="2" fill="#fff"/><rect x="8" y="7" width="2" height="2" fill="#fff"/><rect x="1" y="10" width="2" height="2" fill="#7fd8f8"/><rect x="4" y="10" width="3" height="2" fill="#fff"/><rect x="8" y="10" width="2" height="2" fill="#fff"/></svg>
<div class="t" style="left:48px;top:427px;font-size:12.6px">统计 1</div>
<svg class="a" style="left:92px;top:429px" width="10" height="10" viewBox="0 0 10 10"><path d="M0.5 0.5L9.5 9.5M9.5 0.5L0.5 9.5" stroke="#111" stroke-width="1.1"/></svg>
<div class="a" style="left:24px;top:444px;width:1532px;height:389px;background:#fff"></div>
<div class="a" style="left:121px;top:444px;width:1px;height:23px;background:#d4d4d4"></div>
<div class="a" style="left:121px;top:467px;width:1px;height:366px;background:#e2f2f7"></div>
<div class="a" style="left:751px;top:444px;width:1px;height:23px;background:#d4d4d4"></div>
<div class="a" style="left:751px;top:467px;width:1px;height:366px;background:#e2f2f7"></div>
<div class="a" style="left:24px;top:488px;width:1532px;height:1px;background:#f0f0f0"></div>
<div class="a" style="left:24px;top:509px;width:1532px;height:1px;background:#f0f0f0"></div>
<div class="a" style="left:24px;top:530px;width:1532px;height:1px;background:#f0f0f0"></div>
<div class="a" style="left:24px;top:551px;width:1532px;height:1px;background:#f0f0f0"></div>
<div class="a" style="left:24px;top:572px;width:1532px;height:1px;background:#f0f0f0"></div>
<div class="a" style="left:24px;top:593px;width:1532px;height:1px;background:#f0f0f0"></div>
<div class="a" style="left:24px;top:614px;width:1532px;height:1px;background:#f0f0f0"></div>
<div class="a" style="left:24px;top:635px;width:1532px;height:1px;background:#f0f0f0"></div>
<div class="a" style="left:24px;top:656px;width:1532px;height:1px;background:#f0f0f0"></div>
<div class="a" style="left:24px;top:677px;width:1532px;height:1px;background:#f0f0f0"></div>
<div class="a" style="left:24px;top:698px;width:1532px;height:1px;background:#f0f0f0"></div>
<div class="a" style="left:24px;top:719px;width:1532px;height:1px;background:#f0f0f0"></div>
<div class="a" style="left:24px;top:740px;width:1532px;height:1px;background:#f0f0f0"></div>
<div class="a" style="left:24px;top:761px;width:1532px;height:1px;background:#f0f0f0"></div>
<div class="a" style="left:24px;top:782px;width:1532px;height:1px;background:#f0f0f0"></div>
<div class="a" style="left:24px;top:803px;width:1532px;height:1px;background:#f0f0f0"></div>
<div class="a" style="left:24px;top:824px;width:1532px;height:1px;background:#f0f0f0"></div>
<div class="a" style="left:1556px;top:444px;width:20px;height:389px;background:#f7f7f7"></div>
<svg class="a" style="left:1550px;top:444px" width="26" height="20" viewBox="1550 444 26 20"><path d="M1560.7 455.5L1564 451.3L1567.3 455.5" stroke="#4a4a4a" stroke-width="2" fill="none"/></svg>
<div class="a" style="left:1556px;top:461px;width:15px;height:241px;background:#cdd0cd"></div>
<svg class="a" style="left:1550px;top:815px" width="26" height="18" viewBox="1550 815 26 18"><path d="M1560.7 822.3L1564 826.5L1567.3 822.3" stroke="#4a4a4a" stroke-width="2" fill="none"/></svg>
<div class="t rt" style="left:30px;top:450px;font-size:12.6px;letter-spacing:0.35px">Name</div>
<div class="t rt" style="left:128px;top:450px;font-size:12.6px;letter-spacing:0px">Value</div>
<div class="t rt" style="left:30px;top:473px;font-size:12.6px;letter-spacing:0.25px">Updated Rows</div>
<div class="t rt" style="left:128px;top:473px;font-size:12.6px;letter-spacing:0px">0</div>
<div class="a" style="left:24px;top:444px;width:1532px;height:389px;overflow:hidden">
<div class="t rt" style="left:6px;top:50px;font-size:12.6px;letter-spacing:0.2px">Query</div>
<div class="t rt" style="left:104px;top:50px;font-size:12.6px;letter-spacing:-0.12px">CREATE TABLE audit_bi_pro.custom_offline_sbz_old_system</div>
<div class="t rt" style="left:104px;top:71px;font-size:12.6px;letter-spacing:0px">(</div>
<div class="t rt" style="left:121px;top:92px;font-size:12.6px;letter-spacing:0px">`source_system` String COMMENT &#x27;来源系统&#x27;,</div>
<div class="t rt" style="left:121px;top:113px;font-size:12.6px;letter-spacing:0px">`sale_date` String COMMENT &#x27;销售日期&#x27;,</div>
<div class="t rt" style="left:121px;top:134px;font-size:12.6px;letter-spacing:0px">`brand_code` String COMMENT &#x27;品牌编码&#x27;,</div>
<div class="t rt" style="left:121px;top:155px;font-size:12.6px;letter-spacing:0px">`sale_time` String COMMENT &#x27;销售时间&#x27;,</div>
<div class="t rt" style="left:121px;top:176px;font-size:12.6px;letter-spacing:0px">`store_code` String COMMENT &#x27;门店编码&#x27;,</div>
<div class="t rt" style="left:121px;top:197px;font-size:12.6px;letter-spacing:0px">`store_name` String COMMENT &#x27;门店名称&#x27;,</div>
<div class="t rt" style="left:121px;top:218px;font-size:12.6px;letter-spacing:0px">`receipt_no` String COMMENT &#x27;小票号&#x27;,</div>
<div class="t rt" style="left:121px;top:239px;font-size:12.6px;letter-spacing:0px">`goods_amt` Decimal(18,2) COMMENT &#x27;商品金额&#x27;,</div>
<div class="t rt" style="left:121px;top:260px;font-size:12.6px;letter-spacing:0px">`barcode` String COMMENT &#x27;条码&#x27;,</div>
<div class="t rt" style="left:121px;top:281px;font-size:12.6px;letter-spacing:0px">`goods_name` String COMMENT &#x27;商品名称&#x27;,</div>
<div class="t rt" style="left:121px;top:302px;font-size:12.6px;letter-spacing:0px">`qty` Int64 COMMENT &#x27;数量&#x27;,</div>
<div class="t rt" style="left:121px;top:323px;font-size:12.6px;letter-spacing:0px">`price` Decimal(18,2) COMMENT &#x27;单价&#x27;,</div>
<div class="t rt" style="left:121px;top:344px;font-size:12.6px;letter-spacing:0px">`pay_type` String COMMENT &#x27;收银方式&#x27;,</div>
<div class="t rt" style="left:121px;top:365px;font-size:12.6px;letter-spacing:0px">`source_bill_no` String COMMENT &#x27;原单据号&#x27;</div>
<div class="t rt" style="left:104px;top:386px;font-size:12.6px;letter-spacing:0px">)ENGINE = ReplicatedMergeTree(&#x27;/clickhouse/tables/audit_bi_pro/custom_offline_sbz_old_system/{shard}&#x27;, &#x27;r</div>
</div>
<div class="a" style="left:0;top:833px;width:1600px;height:27px;background:#f7f7f7"></div>
<div class="a" style="left:0;top:833px;width:1600px;height:1px;background:#dadada"></div>
<div class="a" style="left:0;top:859px;width:1600px;height:1px;background:#ffffff"></div>
<div class="a" style="left:778px;top:835px;width:1px;height:21px;background:#a8a8a8"></div>
<div class="a" style="left:814px;top:835px;width:1px;height:21px;background:#a8a8a8"></div>
<div class="a" style="left:841px;top:835px;width:1px;height:21px;background:#a8a8a8"></div>
<div class="a" style="left:975px;top:835px;width:1px;height:21px;background:#a8a8a8"></div>
<div class="a" style="left:1103px;top:835px;width:1px;height:21px;background:#a8a8a8"></div>
<div class="a" style="left:1231px;top:835px;width:1px;height:21px;background:#a8a8a8"></div>
<div class="t" style="left:786px;top:839px;font-size:12.6px">CST</div>
<div class="t" style="left:822px;top:839px;font-size:12.6px">zh</div>
<div class="t" style="left:849px;top:839px;font-size:12.6px">可写</div>
<div class="t" style="left:983px;top:839px;font-size:12.6px">智能插入</div>
<div class="t" style="left:1112px;top:839px;font-size:12.6px">162 : 38 : 5828</div>
<div class="t" style="left:1239px;top:839px;font-size:12.6px">Sel: 0 | 0</div>
<div class="a" style="left:1315px;top:840px;width:2px;height:2px;background:#b8ac98"></div><div class="a" style="left:1315px;top:844px;width:2px;height:2px;background:#b8ac98"></div><div class="a" style="left:1315px;top:848px;width:2px;height:2px;background:#b8ac98"></div><div class="a" style="left:1315px;top:852px;width:2px;height:2px;background:#b8ac98"></div>
<div class="a" style="left:0;top:860px;width:1600px;height:40px;background:#000"></div>
<svg class="a" style="left:16px;top:872px" width="16" height="16" viewBox="0 0 16 16"><path d="M0 2.3L6.5 1.4V7.5H0z M7.4 1.3L16 0V7.5H7.4z M0 8.5H6.5V14.6L0 13.7z M7.4 8.5H16V16L7.4 14.7z" fill="#fff"/></svg>
<svg class="a" style="left:64px;top:872px" width="17" height="17" viewBox="0 0 17 17"><circle cx="10.5" cy="6.5" r="5.3" fill="none" stroke="#fff" stroke-width="1.3"/><path d="M6.8 10.2L0.8 16.2" stroke="#fff" stroke-width="1.4"/></svg>
<svg class="a" style="left:100px;top:860px" width="250" height="40" viewBox="100 860 250 40"><path d="M112.5 872v1.5h10.5V872M112.5 887v-1.5h10.5v1.5" stroke="#fff" stroke-width="1.1" fill="none"/><rect x="112.5" y="876.5" width="10.5" height="6.5" fill="none" stroke="#fff" stroke-width="1.1"/><path d="M126.8 872v15" stroke="#fff" stroke-width="1.1"/><rect x="125.3" y="876.3" width="3" height="3" fill="#fff"/><defs><radialGradient id="ieg" cx="0.4" cy="0.35" r="0.7"><stop offset="0" stop-color="#b8ecfc"/><stop offset="0.6" stop-color="#3cb4ec"/><stop offset="1" stop-color="#1a7cc8"/></radialGradient></defs><path d="M171.5 871.5a9 9 0 0 0-9 9 9 9 0 0 0 9 9c3.6 0 6.8-2.1 8.2-5.3h-5c-.8 1-1.9 1.6-3.2 1.6-2 0-3.7-1.4-4.1-3.3h12.6v-2A9 9 0 0 0 171.5 871.5zm-4.1 7.3c.5-1.8 2.2-3.2 4.1-3.2s3.6 1.4 4.1 3.2z" fill="url(#ieg)"/><path d="M162.5 889.5c-3-2 1-9.5 7-14.5 6-5 12-7.5 12.5-5 .3 1.5-1.5 4-4 6.5" stroke="#f0c020" stroke-width="1.5" fill="none"/><path d="M209 872.5c0-.8.6-1.2 1.3-1.2h5.5l1.6 1.6h11.6c.7 0 1.3.6 1.3 1.3V889H209z" fill="#f0c860"/><rect x="209" y="874.5" width="21.3" height="14.5" rx="0.8" fill="#fde597"/><rect x="210" y="872" width="5" height="1.2" fill="#fff8d8"/><path d="M213.5 889.5v-7.5h12.5v7.5h-3.2v-4.5h-6v4.5z" fill="#2a9ae8"/></svg>
<svg class="a" style="left:256px;top:867px" width="26" height="26" viewBox="-13 -13 26 26"><circle r="10.8" fill="#fff" stroke="#4cbcbf" stroke-width="2.2"/><path d="M-3.8 8.8c.3-2.6 1.2-4.8 2.8-6.3 1.5-.3 3-.2 4.2.6l1-2.5c.6-.8 1-.4.8.6l-.4 1.8c.5-.6.9-.3.7.5l-1.5 3.8c.5 1.2 1 2 1.5 2.3-2.5 1.6-6.4 1.8-9.1-.8z" fill="#342a24"/><path d="M2.5-4.5c1-.8 2.6-.9 3.6-.4-.3 1.2-1.5 1.8-2.6 1.7z" fill="#342a24"/><circle cx="-1.8" cy="-4.6" r=".8" fill="#342a24"/><path d="M-7.5 3c0-3 .8-6 2.5-7.5M-5.5-5c2-2.5 5-3.2 7.5-2.8" stroke="#504640" stroke-width="1" fill="none"/></svg>
<div class="a" style="left:294px;top:860px;width:48px;height:37px;background:#333"></div>
<div class="a" style="left:294px;top:897px;width:48px;height:3px;background:#6db8f0"></div>
<svg class="a" style="left:305px;top:867px" width="26" height="26" viewBox="-13 -13 26 26"><circle r="10.8" fill="#fff" stroke="#4cbcbf" stroke-width="2.2"/><path d="M-3.8 8.8c.3-2.6 1.2-4.8 2.8-6.3 1.5-.3 3-.2 4.2.6l1-2.5c.6-.8 1-.4.8.6l-.4 1.8c.5-.6.9-.3.7.5l-1.5 3.8c.5 1.2 1 2 1.5 2.3-2.5 1.6-6.4 1.8-9.1-.8z" fill="#342a24"/><path d="M2.5-4.5c1-.8 2.6-.9 3.6-.4-.3 1.2-1.5 1.8-2.6 1.7z" fill="#342a24"/><circle cx="-1.8" cy="-4.6" r=".8" fill="#342a24"/><path d="M-7.5 3c0-3 .8-6 2.5-7.5M-5.5-5c2-2.5 5-3.2 7.5-2.8" stroke="#504640" stroke-width="1" fill="none"/></svg>
<svg class="a" style="left:1347px;top:875px" width="13" height="8" viewBox="0 0 13 8"><path d="M0.8 7.2L6.5 1.5L12.2 7.2" stroke="#fff" stroke-width="1.2" fill="none"/></svg>
<svg class="a" style="left:1372px;top:871px" width="14" height="18" viewBox="0 0 14 18"><rect x="1.5" y="4.5" width="7" height="12" rx="1" fill="none" stroke="#fff"/><rect x="2.5" y="0.5" width="5" height="4" fill="none" stroke="#fff"/><path d="M8 15l2 2 3.5-4" stroke="#fff" fill="none"/></svg>
<svg class="a" style="left:1393px;top:872px" width="17" height="16" viewBox="0 0 17 16"><rect x="3.5" y="1.5" width="13" height="9" fill="none" stroke="#fff"/><path d="M10 10.5v3M6 13.5h8M0.5 1.5h4v4h-4zM2.5 5.5v9" stroke="#fff" fill="none"/></svg>
<svg class="a" style="left:1417px;top:872px" width="17" height="16" viewBox="0 0 17 16"><path d="M0.5 5.5h3l4-4v13l-4-4h-3z" fill="none" stroke="#fff"/><path d="M9.5 5.5c1 1.5 1 3.5 0 5M11.5 3.5c2 2.5 2 6.5 0 9M13.5 1.5c3 3.5 3 9.5 0 13" stroke="#fff" fill="none"/></svg>
<div class="t" style="left:1443px;top:873px;font-size:12.6px;color:#fff">ENG</div>
<div class="t" style="left:1495px;top:864px;font-size:12.6px;color:#fff">16:54</div>
<div class="t" style="left:1477px;top:883px;font-size:12.9px;color:#fff">2025/10/16</div>
<svg class="a" style="left:1559px;top:871px" width="17" height="17" viewBox="0 0 17 17"><path d="M0.5 0.5h16v12h-5.5l-2.5 3-2.5-3H0.5z" fill="none" stroke="#fff"/></svg>
<div class="a" style="left:1597px;top:860px;width:1px;height:40px;background:#555"></div>
<div class="a" style="left:1588px;top:0;width:12px;height:860px;background:linear-gradient(90deg,rgba(0,0,0,0),rgba(0,0,0,0.045))"></div>
<div class="wm" style="left:-232px;top:215px">audit审计03(Audit3)<br>audit-172.18.210.237</div>
<div class="wm" style="left:68px;top:215px">audit审计03(Audit3)<br>audit-172.18.210.237</div>
<div class="wm" style="left:368px;top:215px">audit审计03(Audit3)<br>audit-172.18.210.237</div>
<div class="wm" style="left:668px;top:215px">audit审计03(Audit3)<br>audit-172.18.210.237</div>
<div class="wm" style="left:968px;top:215px">audit审计03(Audit3)<br>audit-172.18.210.237</div>
<div class="wm" style="left:1268px;top:215px">audit审计03(Audit3)<br>audit-172.18.210.237</div>
<div class="wm" style="left:1568px;top:215px">audit审计03(Audit3)<br>audit-172.18.210.237</div>
<div class="wm" style="left:-232px;top:515px">audit审计03(Audit3)<br>audit-172.18.210.237</div>
<div class="wm" style="left:68px;top:515px">audit审计03(Audit3)<br>audit-172.18.210.237</div>
<div class="wm" style="left:368px;top:515px">audit审计03(Audit3)<br>audit-172.18.210.237</div>
<div class="wm" style="left:668px;top:515px">audit审计03(Audit3)<br>audit-172.18.210.237</div>
<div class="wm" style="left:968px;top:515px">audit审计03(Audit3)<br>audit-172.18.210.237</div>
<div class="wm" style="left:1268px;top:515px">audit审计03(Audit3)<br>audit-172.18.210.237</div>
<div class="wm" style="left:1568px;top:515px">audit审计03(Audit3)<br>audit-172.18.210.237</div>
<div class="wm" style="left:-232px;top:815px">audit审计03(Audit3)<br>audit-172.18.210.237</div>
<div class="wm" style="left:68px;top:815px">audit审计03(Audit3)<br>audit-172.18.210.237</div>
<div class="wm" style="left:368px;top:815px">audit审计03(Audit3)<br>audit-172.18.210.237</div>
<div class="wm" style="left:668px;top:815px">audit审计03(Audit3)<br>audit-172.18.210.237</div>
<div class="wm" style="left:968px;top:815px">audit审计03(Audit3)<br>audit-172.18.210.237</div>
<div class="wm" style="left:1268px;top:815px">audit审计03(Audit3)<br>audit-172.18.210.237</div>
<div class="wm" style="left:1568px;top:815px">audit审计03(Audit3)<br>audit-172.18.210.237</div>
</body></html>
